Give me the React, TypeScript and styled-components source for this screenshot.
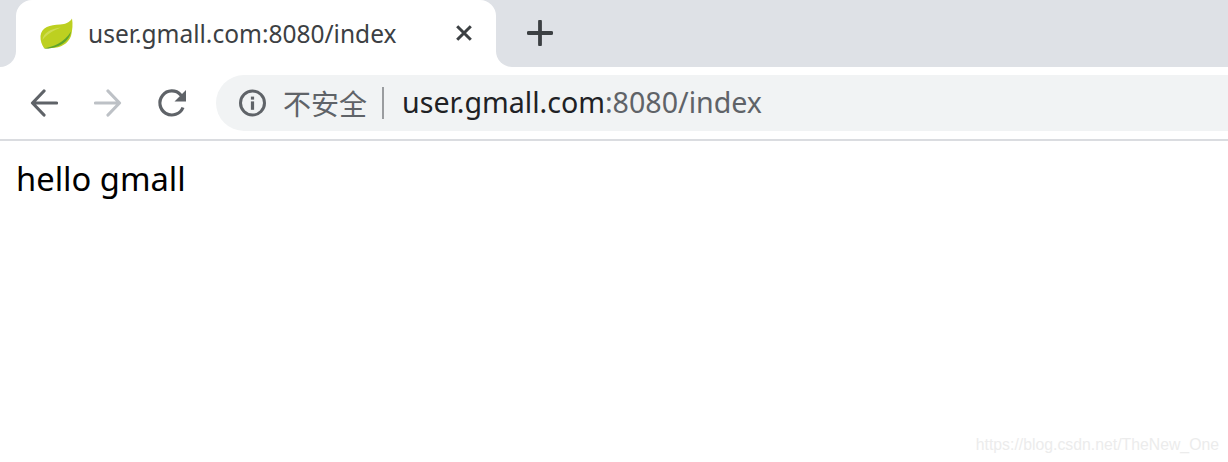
import React from "react";
import styled, { createGlobalStyle } from "styled-components";

const Global = createGlobalStyle`
  html, body { margin: 0; padding: 0; background: #fff; }
  body { font-family: "Noto Sans", "Open Sans", "Noto Sans CJK SC", sans-serif; overflow: hidden; }
`;

const Page = styled.div`
  width: 1228px;
  height: 462px;
  display: flex;
  flex-direction: column;
`;

const TabStrip = styled.div`
  height: 67px;
  display: flex;
  background: #dee1e6;
`;

const StripEdge = styled.div`
  width: 16px;
  background: #fff;
  &::before {
    content: "";
    display: block;
    height: 100%;
    background: #dee1e6;
    border-bottom-right-radius: 16px;
  }
`;

const Tab = styled.div`
  width: 480px;
  box-sizing: border-box;
  padding: 0 22px 0 24px;
  display: flex;
  align-items: center;
  background: #fff;
  border-radius: 16px 16px 0 0;
`;

const TabTitle = styled.span`
  flex: 1;
  margin-left: 14px;
  font-size: 24.5px;
  color: #3c4043;
  white-space: nowrap;
`;

const CloseBox = styled.span`
  display: flex;
  margin-bottom: 1px;
`;

const StripRest = styled.div`
  flex: 1;
  background: #fff;
`;

const StripRestFill = styled.div`
  height: 100%;
  box-sizing: border-box;
  display: flex;
  align-items: center;
  padding: 0 0 1px 31px;
  background: #dee1e6;
  border-bottom-left-radius: 16px;
`;

const Toolbar = styled.div`
  height: 74px;
  box-sizing: border-box;
  padding-left: 12px;
  display: flex;
  align-items: center;
  background: #fff;
  border-bottom: 2px solid #dadce0;
`;

const NavButton = styled.div`
  width: 64px;
  height: 56px;
  display: flex;
  align-items: center;
  justify-content: center;
`;

const Omnibox = styled.div`
  flex: 1;
  height: 56px;
  margin-left: 12px;
  padding-left: 22px;
  display: flex;
  align-items: center;
  background: #f1f3f4;
  border-radius: 28px 0 0 28px;
`;

const SecurityLabel = styled.span`
  margin-left: 17px;
  font-family: "Noto Sans CJK SC", sans-serif;
  font-size: 28px;
  color: #5f6368;
`;

const Divider = styled.span`
  width: 2px;
  height: 32px;
  margin: 0 18px 0 15px;
  background: #9a9c9f;
`;

const Url = styled.span`
  margin-bottom: 3px;
  font-size: 28.6px;
  color: #202124;
  white-space: nowrap;
`;

const UrlRest = styled.span`
  color: #5f6368;
`;

const Content = styled.main`
  flex: 1;
  padding: 18px 16px 8px;
  display: flex;
  flex-direction: column;
  justify-content: space-between;
`;

const Hello = styled.p`
  margin: 0;
  font-size: 32.7px;
  line-height: 40px;
  color: #000;
`;

const Watermark = styled.span`
  align-self: flex-end;
  margin-right: -7px;
  font-family: "Liberation Sans", sans-serif;
  font-size: 15.8px;
  color: #ececec;
`;

const Leaf = () => (
  <svg width="34" height="32" viewBox="0 0 34 32" aria-hidden="true">
    <path d="M32 .5C29.500 4.500 26 6 20 6.500C10 7 1.500 9 .5 18C.2 23 2 27 4 30C6 31 8 30.500 10 30C20 30.500 28 26 31 18C32.500 12 33 6 32 .5Z" fill="#bdd020" />
    <path d="M3.500 30.500C13 29 24 25 31 13.500C29.500 24 17 31.500 3.500 30.500Z" fill="#5fa52c" />
    <path d="M2.500 22C3 15 11 10.500 21 9.500C13 12.500 7 16 2.500 22Z" fill="#cfdc52" />
  </svg>
);

const CloseIcon = () => (
  <svg width="20" height="20" viewBox="0 0 20 20" aria-hidden="true">
    <path d="M3.200 3.200 16.800 16.800M16.800 3.200 3.200 16.800" stroke="#3c4043" strokeWidth="3" fill="none" />
  </svg>
);

const PlusIcon = () => (
  <svg width="26" height="26" viewBox="0 0 26 26" aria-hidden="true">
    <path d="M13 1.500V24.500M1.500 13H24.500" stroke="#3c4043" strokeWidth="3.800" strokeLinecap="round" fill="none" />
  </svg>
);

const ArrowLeft = ({ color }: { color: string }) => (
  <svg width="28" height="28" viewBox="0 0 28 28" aria-hidden="true">
    <path d="M26.500 14H3.500M14 2 2.500 14 14 26" stroke={color} strokeWidth="3.200" fill="none" strokeLinecap="round" strokeLinejoin="round" />
  </svg>
);

const ArrowRight = ({ color }: { color: string }) => (
  <svg width="28" height="28" viewBox="0 0 28 28" aria-hidden="true">
    <path d="M1.500 14H24.500M14 2 25.500 14 14 26" stroke={color} strokeWidth="3.200" fill="none" strokeLinecap="round" strokeLinejoin="round" />
  </svg>
);

const ReloadIcon = () => (
  <svg width="30" height="30" viewBox="0 0 30 30" aria-hidden="true">
    <path d="M26 19.500A12 12 0 1 1 23.700 6.800L26.300 9.400" stroke="#5f6368" strokeWidth="3.200" fill="none" />
    <path d="M29 2V13.500H17.500Z" fill="#5f6368" />
  </svg>
);

const InfoIcon = () => (
  <svg width="28" height="28" viewBox="0 0 28 28" aria-hidden="true">
    <circle cx="14.500" cy="14" r="12" stroke="#5f6368" strokeWidth="3" fill="none" />
    <rect x="12.900" y="7.600" width="3.200" height="3" fill="#5f6368" />
    <rect x="12.900" y="12.400" width="3.200" height="8.400" fill="#5f6368" />
  </svg>
);

export default function App() {
  return (
    <Page>
      <Global />
      <TabStrip>
        <StripEdge />
        <Tab>
          <Leaf />
          <TabTitle>user.gmall.com:8080/index</TabTitle>
          <CloseBox>
            <CloseIcon />
          </CloseBox>
        </Tab>
        <StripRest>
          <StripRestFill>
            <PlusIcon />
          </StripRestFill>
        </StripRest>
      </TabStrip>
      <Toolbar>
        <NavButton>
          <ArrowLeft color="#5f6368" />
        </NavButton>
        <NavButton>
          <ArrowRight color="#bdc1c6" />
        </NavButton>
        <NavButton>
          <ReloadIcon />
        </NavButton>
        <Omnibox>
          <InfoIcon />
          <SecurityLabel>不安全</SecurityLabel>
          <Divider />
          <Url>
            user.gmall.com<UrlRest>:8080/index</UrlRest>
          </Url>
        </Omnibox>
      </Toolbar>
      <Content>
        <Hello>hello gmall</Hello>
        <Watermark>https://blog.csdn.net/TheNew_One</Watermark>
      </Content>
    </Page>
  );
}
